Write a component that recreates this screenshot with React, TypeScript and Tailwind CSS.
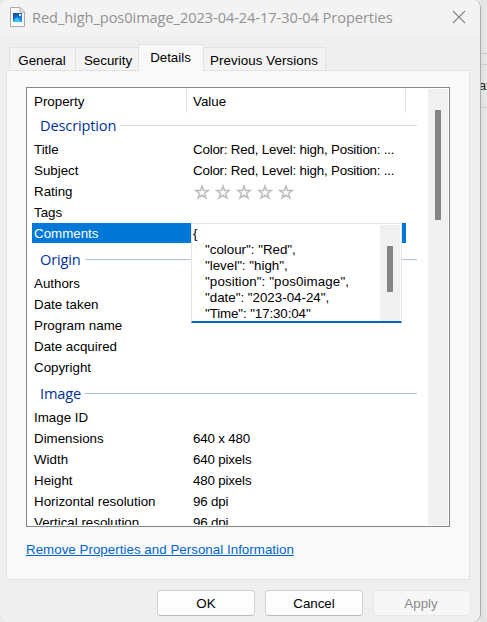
import React from "react";

const description: [string, string][] = [
  ["Title", "Color: Red, Level: high, Position: ..."],
  ["Subject", "Color: Red, Level: high, Position: ..."],
];
const origin = ["Authors", "Date taken", "Program name", "Date acquired", "Copyright"];
const image: [string, string][] = [
  ["Image ID", ""],
  ["Dimensions", "640 x 480"],
  ["Width", "640 pixels"],
  ["Height", "480 pixels"],
  ["Horizontal resolution", "96 dpi"],
  ["Vertical resolution", "96 dpi"],
];

function Row({ name, children }: { name: string; children?: React.ReactNode }) {
  return (
    <div className="flex h-[21px] shrink-0 items-center whitespace-nowrap pl-[6px]">
      <span className="w-[159px]">{name}</span>
      <span className="tracking-[-0.16px]">{children}</span>
    </div>
  );
}

function Heading({ children, first = false }: { children: string; first?: boolean }) {
  return (
    <div className={`flex h-[26px] shrink-0 items-center pl-[12px] ${first ? "" : "mt-[3px]"}`}>
      <span className="relative -top-px font-['Open_Sans','Noto_Sans',sans-serif] text-[14.6px] leading-[20px] tracking-[-0.15px] text-[#003399]">
        {children}
      </span>
      <span className={`relative -top-px ml-1 mr-[11px] h-px flex-1 ${first ? "bg-[#d5dfe5]" : "bg-[#b0bfe0]"}`} />
    </div>
  );
}

function Stars() {
  return (
    <span className="flex gap-[5px] pl-[1px]">
      {[0, 1, 2, 3, 4].map((i) => (
        <svg key={i} width="16" height="16" viewBox="0 0 16 16" fill="none" stroke="#bdbdbd" strokeWidth="1.5">
          <path d="M8 2 L9.5 6.5 H14.3 L10.5 9.5 L12 14 L8 11.2 L4 14 L5.5 9.5 L1.7 6.5 H6.5 Z" />
        </svg>
      ))}
    </span>
  );
}

function TitleBar() {
  return (
    <div className="flex h-9 shrink-0 items-center bg-[#f3f3f3] pb-[2px] pl-[10px]">
      <svg width="16" height="20" viewBox="0 0 16 20" className="shrink-0">
        <defs>
          <linearGradient id="photo" x1="0" y1="0" x2="1" y2="1">
            <stop offset="0" stopColor="#1746ad" />
            <stop offset="1" stopColor="#1b95ed" />
          </linearGradient>
        </defs>
        <path d="M.5 .5H10L14.5 5V19.5H.5Z" fill="#fafafa" stroke="#aaa" />
        <path d="M10 .5V5H14.5" fill="none" stroke="#aaa" />
        <rect x="3" y="6" width="9" height="9" fill="url(#photo)" />
        <path d="M3 14L7 10L12 15H3Z" fill="#38c1f5" />
        <rect x="9" y="7" width="2" height="2" fill="#d9f3ff" />
      </svg>
      <span className="ml-[6px] whitespace-nowrap font-['Open_Sans','Noto_Sans',sans-serif] text-[14.6px] tracking-[-0.07px] text-[#929292]">
        Red_high_pos0image_2023-04-24-17-30-04 Properties
      </span>
      <svg width="14" height="14" viewBox="0 0 14 14" className="ml-auto mr-[14px]" fill="none" stroke="#858585" strokeWidth="1.1">
        <path d="M1 1L13 13M13 1L1 13" />
      </svg>
    </div>
  );
}

export default function App() {
  return (
    <div className="flex h-[622px] w-[487px] overflow-hidden bg-[#e8e8e8] font-['Liberation_Sans',Arial,sans-serif] text-[13.33px] leading-4 text-black">
      <div className="flex h-[622px] w-[481px] shrink-0 flex-col overflow-hidden rounded-[8px] border-r border-[#aeaeae] bg-[#efefef]">
        <TitleBar />
        <div className="flex h-[34px] shrink-0 items-end whitespace-nowrap pl-[9px]">
          <div className="flex h-[23px] w-[66px] items-center justify-center border-l border-t border-[#e2e2e2] bg-[#f3f3f3] pr-px pt-[3px]">General</div>
          <div className="flex h-[23px] w-[63px] items-center justify-center border-l border-t border-[#e2e2e2] bg-[#f3f3f3] pl-[2px] pt-[3px]">Security</div>
          <div className="z-10 -mb-px flex h-[27px] w-[66px] items-center justify-center border-x border-t border-[#e2e2e2] bg-[#f9f9f9] pr-px">Details</div>
          <div className="flex h-[23px] w-[122px] items-center justify-center border-r border-t border-[#e2e2e2] bg-[#f3f3f3] pt-[3px]"><span className="-ml-px tracking-[0.08px]">Previous Versions</span></div>
        </div>
        <div className="ml-[6px] flex h-[510px] w-[464px] shrink-0 flex-col border border-[#e2e2e2] bg-[#f9f9f9] pl-[19px] pt-4">
          <div className="relative flex h-[440px] w-[424px] shrink-0 overflow-hidden border border-[#828790] bg-white p-px">
            <div className="flex w-[401px] flex-col overflow-hidden">
              <div className="flex h-6 shrink-0 pl-[6px]">
                <div className="w-[153px] border-r border-[#e2e2e2] pt-[5px]">Property</div>
                <div className="w-[219px] border-r border-[#e2e2e2] pl-[6px] pt-[5px]">Value</div>
              </div>
              <Heading first>Description</Heading>
              {description.map(([k, v]) => (
                <Row key={k} name={k}><span className="tracking-[-0.2px]">{v}</span></Row>
              ))}
              <Row name="Rating"><Stars /></Row>
              <Row name="Tags" />
              <div className="ml-1 flex h-5 w-[374px] shrink-0 items-center bg-[#0078d7] pl-[2px] pt-px text-white">Comments</div>
              <div className="h-px shrink-0" />
              <Heading>Origin</Heading>
              {origin.map((k) => <Row key={k} name={k} />)}
              <Heading>Image</Heading>
              {image.map(([k, v]) => <Row key={k} name={k}>{v}</Row>)}
            </div>
            <div className="flex w-5 flex-col items-center bg-[#f0f0f0] pt-[21px]">
              <div className="h-[110px] w-[6px] bg-[#858585]" />
            </div>
            <div className="absolute left-[164px] top-[135px] flex h-[100px] w-[211px] border border-b-2 border-[#e5e5e5] border-b-[#0067c0] bg-white">
              <div className="flex-1 whitespace-pre pl-px pt-[2px]">
                <div>{"{"}</div>
                <div className="pl-3">
                  <div>"colour": "Red",</div>
                  <div>"level": "high",</div>
                  <div className="tracking-[0.12px]">"position": "pos0image",</div>
                  <div>"date": "2023-04-24",</div>
                  <div className="tracking-[-0.1px]">"Time": "17:30:04"</div>
                </div>
              </div>
              <div className="mr-px mt-px flex w-5 justify-center bg-[#f0f0f0] pt-[21px]">
                <div className="h-[46px] w-[6px] bg-[#858585]" />
              </div>
            </div>
          </div>
          <div className="mt-[15px] whitespace-nowrap tracking-[0.03px] text-[#0066cc] underline">Remove Properties and Personal Information</div>
        </div>
        <div className="flex gap-[10px] pl-[157px] pt-[10px]">
          <div className="flex h-[26px] w-[98px] items-center justify-center rounded border border-[#d0d0d0] border-b-[#bcbcbc] bg-[#fdfdfd] pt-[2px]">OK</div>
          <div className="flex h-[26px] w-[98px] items-center justify-center rounded border border-[#d0d0d0] border-b-[#bcbcbc] bg-[#fdfdfd] pt-[2px]">Cancel</div>
          <div className="flex h-[26px] w-[98px] items-center justify-center rounded border border-[#e7e7e7] bg-[#f7f7f7] pr-[2px] pt-[2px] text-[#8b8b8b]">Apply</div>
        </div>
      </div>
      <div className="flex flex-1 flex-col bg-gradient-to-r from-[#dedede] to-[#efefef]">
        <div className="h-[54px] border-b border-[#c9c9c9]" />
        <div className="h-[11px] border-b border-[#c9c9c9]" />
        <div className="h-[43px] overflow-hidden border-b border-[#c9c9c9] pt-[13px] text-[13px] text-[#222]"><span className="-ml-[2px]">at</span></div>
      </div>
    </div>
  );
}
